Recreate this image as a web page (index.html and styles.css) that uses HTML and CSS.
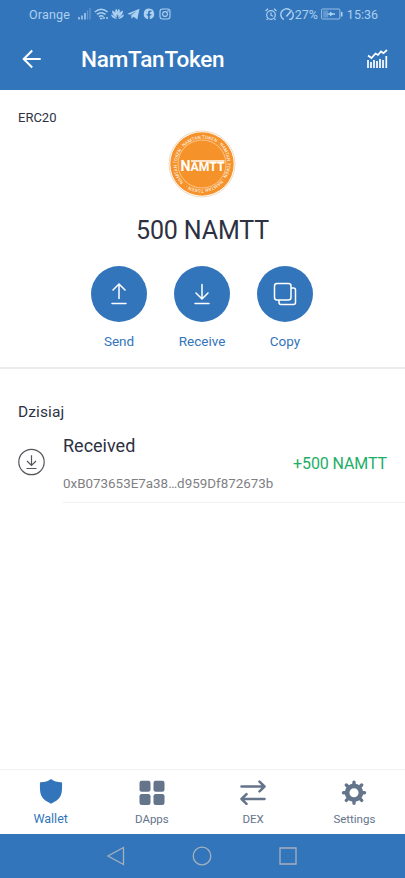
FILE: index.html
```html
<!DOCTYPE html>
<html lang="en">
<head>
    <meta charset="UTF-8">
    <meta name="viewport" content="width=device-width, initial-scale=1">
    <title>NamTanToken</title>
    <link rel="stylesheet" href="styles.css">
</head>
<body>

    <div class="status-bar">
        <div class="status-left">
            <span class="carrier">Orange</span>
            <svg class="signal" width="13" height="12" viewBox="0 0 13 12">
                <path d="M1 9v2.500M4 7.500v4M7 5v6.500" stroke="currentColor" stroke-width="1.500"/>
                <path d="M9.500 2.500v9M12 0v11.500" stroke="currentColor" stroke-width="1.300" opacity=".4"/>
            </svg>
            <svg class="wifi" width="15" height="12" viewBox="0 0 15 12" fill="none" stroke="currentColor" stroke-width="1.400">
                <path d="M.8 4q6.400-5.500 12.800 0M2.900 6.400q4.300-3.400 8.600 0M4.900 8.600q2.300-1.600 4.600 0"/>
                <path d="M6 10.500h2.500M10 9v2M13 9v2"/>
            </svg>
            <svg class="flower" width="13" height="12" viewBox="0 0 13 12" fill="currentColor">
                <path d="M5.800 11C3 11 .6 9.500 0 6.600c2.200.4 4 2 5.800 4.400zM7.200 11c2.800 0 5.200-1.500 5.800-4.400-2.200.4-4 2-5.800 4.400zM6 9.700C2.800 8 .7 5.500 1.200 2.500 4 3.300 5.800 6 6 9.700zM7 9.700c3.200-1.700 5.300-4.200 4.800-7.200C9 3.300 7.200 6 7 9.700zM6.200 7.700C3.800 5 3.500 2.800 5.100.8c1.500 1.600 1.900 4.200 1.100 6.900zM6.800 7.700C9.200 5 9.500 2.800 7.900.8c-1.500 1.600-1.900 4.200-1.100 6.900z"/>
            </svg>
            <svg class="telegram" width="13" height="12" viewBox="0 0 13 12">
                <path d="M.3 5.800 12.500.7l-2.200 10.800-3.800-2.700-2 2-.3-3.500 5.600-4.500-6.700 4z" fill="currentColor"/>
            </svg>
            <svg class="facebook" width="12" height="12" viewBox="0 0 12 12">
                <path fill="currentColor" d="M6 .6a5.400 5.400 0 0 0-.9 10.700V7.500H3.700V6h1.400V4.800c0-1.500.8-2.200 2.100-2.200l1.200.1V4h-.7c-.7 0-.9.4-.9.900V6h1.600l-.3 1.500H6.800v3.800A5.400 5.400 0 0 0 6 .6z"/>
            </svg>
            <svg class="instagram" width="12" height="12" viewBox="0 0 12 12" fill="none" stroke="currentColor" stroke-width="1.100">
                <rect x="1" y="1" width="10" height="10" rx="2.500"/>
                <circle cx="6" cy="6" r="2.400"/>
                <circle cx="9" cy="3" r=".3"/>
            </svg>
        </div>
        <div class="status-right">
            <svg class="alarm" width="12" height="13" viewBox="0 0 12 13" fill="none" stroke="currentColor" stroke-width="1.200">
                <circle cx="6" cy="7" r="4.300"/>
                <path d="M6 4.500V7.200L8 8.300M.5 3 3 .8M11.500 3 9 .8M2.600 10.700l-1 1.300M9.400 10.700l1 1.300"/>
            </svg>
            <svg class="gauge" width="15" height="13" viewBox="0 0 15 13" fill="none" stroke="currentColor" stroke-width="1.400" stroke-linecap="round">
                <path d="M3.300 11.200A5.600 5.600 0 0 1 9.800 1.800M12.600 4.500a5.600 5.600 0 0 1-1.400 6.700h-1.500"/>
                <path d="M6.800 8 11.500 2.500" stroke-width="1.600"/>
            </svg>
            <span class="percent">27%</span>
            <svg class="battery" width="22" height="12" viewBox="0 0 22 12">
                <rect x=".6" y="1" width="18.300" height="10" rx="1" fill="none" stroke="currentColor" opacity=".8"/>
                <path d="M2.200 2.500h5v7h-5z" fill="currentColor" opacity=".4"/>
                <path d="M20.700 4v4.500" stroke="currentColor" stroke-width="1.600"/>
                <path d="M5.500 6 9 4.900V3.500l2.500 1.800H14v1.400h-2.500L9 8.500V7.100z" fill="currentColor"/>
            </svg>
            <span class="time">15:36</span>
        </div>
    </div>

    <header class="header">
        <svg class="back" width="20" height="20" viewBox="0 0 20 20" fill="none" stroke="#fff" stroke-width="2">
            <path d="M18.700 10H2M10.200 1.500 1.700 10l8.500 8.500"/>
        </svg>
        <h1>NamTanToken</h1>
        <svg class="chart" width="21" height="20" viewBox="0 0 21 20" fill="none" stroke="#fff">
            <path d="M1 11v8M4 13v6M7 11v8M10 12v7M13 10v9M16 11v8M19.300 7v12" stroke-width="1.700"/>
            <path d="M1 6.500 4.500 9 8.500 4.500 11 6l3-3.500 2.500 1.700L20 1" stroke-width="1.700"/>
        </svg>
    </header>

    <main>
        <section class="token">
            <p class="token-type">ERC20</p>
            <svg class="token-logo" width="68" height="68" viewBox="0 0 68 68">
                <circle cx="34" cy="34" r="33" fill="#fff" stroke="#e9c9a6" stroke-width=".7"/>
                <circle cx="34" cy="34" r="31.700" fill="#f6922a"/>
                <circle cx="34" cy="34" r="24" fill="none" stroke="#fbd3a5" stroke-width=".8"/>
                <path id="ring" d="M15.500 52.500a26.200 26.200 0 0 1 37-37 26.200 26.200 0 0 1-37 37" fill="none"/>
                <text class="ring-text"><textPath href="#ring">NAMTAN TOKEN · NAMTAN TOKEN · NAMTAN TOKEN · NAMTAN TOKEN ·</textPath></text>
                <text class="logo-text" x="12.500" y="40.500" textLength="44" lengthAdjust="spacingAndGlyphs"><tspan class="logo-cap">N</tspan>AMTT</text>
                <path d="M23 31h33.500" stroke="#fff" stroke-width="1.500"/>
            </svg>
            <p class="balance">500 NAMTT</p>
            <div class="actions">
                <div class="action">
                    <span class="action-icon">
                        <svg width="24" height="24" viewBox="0 0 24 24" fill="none" stroke="#fff" stroke-width="1.500" stroke-linecap="round">
                            <path d="M12 16.500V2.500M6 8l6-6 6 6M5 21.500h14"/>
                        </svg>
                    </span>
                    <span>Send</span>
                </div>
                <div class="action">
                    <span class="action-icon">
                        <svg width="24" height="24" viewBox="0 0 24 24" fill="none" stroke="#fff" stroke-width="1.500" stroke-linecap="round">
                            <path d="M12 2.500v14M6 11l6 6 6-6M5 21.500h14"/>
                        </svg>
                    </span>
                    <span>Receive</span>
                </div>
                <div class="action">
                    <span class="action-icon">
                        <svg width="24" height="24" viewBox="0 0 24 24" fill="none" stroke="#fff" stroke-width="1.500">
                            <rect x="1.500" y="1.500" width="16.500" height="16.500" rx="2.500"/>
                            <path d="M18 6h2.500a2 2 0 0 1 2 2v12.500a2 2 0 0 1-2 2H8a2 2 0 0 1-2-2V18"/>
                        </svg>
                    </span>
                    <span>Copy</span>
                </div>
            </div>
        </section>

        <section class="history">
            <h2>Dzisiaj</h2>
            <div class="transaction">
                <svg class="transaction-icon" width="28" height="28" viewBox="0 0 28 28" fill="none" stroke="#55565b" stroke-width="1.200">
                    <circle cx="13.500" cy="14" r="12.700"/>
                    <path d="M13.500 7.300v10M9 13l4.500 4.500 4.500-4.500M8.500 20.500h10"/>
                </svg>
                <div class="transaction-body">
                    <div>
                        <h3>Received</h3>
                        <p class="address">0xB073653E7a38…d959Df872673b</p>
                    </div>
                    <span class="amount">+500 NAMTT</span>
                </div>
            </div>
        </section>
    </main>

    <nav class="tabs">
        <a class="tab active">
            <svg width="26" height="26" viewBox="0 0 26 26">
                <path d="M13 .1c3 2.500 6.300 3.200 10.200 3.200.6 0 .9.300.9.900-.1 5.300.2 9.300-1.700 13.100-1.700 3.200-5.100 5.300-9.400 7.500-4.300-2.200-7.700-4.300-9.400-7.500C1.700 13.500 2 9.500 1.900 4.200c0-.6.3-.9.900-.9C6.700 3.300 10 2.600 13 .1z" fill="currentColor"/>
            </svg>
            <span>Wallet</span>
        </a>
        <a class="tab">
            <svg width="26" height="26" viewBox="0 0 26 26" fill="currentColor">
                <rect x=".5" y="1.800" width="11" height="11" rx="2.200"/>
                <rect x="14.500" y="1.800" width="11" height="11" rx="2.200"/>
                <rect x=".5" y="15" width="11" height="11" rx="2.200"/>
                <rect x="14.500" y="15" width="11" height="11" rx="2.200"/>
            </svg>
            <span>DApps</span>
        </a>
        <a class="tab">
            <svg width="26" height="26" viewBox="0 0 26 26" fill="none" stroke="currentColor" stroke-width="2.500" stroke-linecap="round" stroke-linejoin="round">
                <path d="M1.500 7.500h22.500M19.500 2.700l5 4.800-5 4.800M24.500 20H2M6.500 15.200l-5 4.800 5 4.800"/>
            </svg>
            <span>DEX</span>
        </a>
        <a class="tab">
            <svg width="26" height="26" viewBox="0 0 26 26" fill="none" stroke="currentColor">
                <circle cx="13" cy="13.700" r="6.900" stroke-width="4.700"/>
                <path d="M13 5V3.200M13 22.400v1.800M4.300 13.700H2.500M21.700 13.700h1.800M6.800 7.500 5.300 6M19.200 7.500 20.700 6M6.800 19.900l-1.500 1.500M19.200 19.900l1.500 1.500" stroke-width="3.400" stroke-linecap="round"/>
            </svg>
            <span>Settings</span>
        </a>
    </nav>

    <div class="system-nav">
        <svg width="20" height="20" viewBox="0 0 20 20"><path d="M17.500 1.500v17L2 10z"/></svg>
        <svg width="20" height="20" viewBox="0 0 20 20"><circle cx="10" cy="10" r="8.800"/></svg>
        <svg width="20" height="20" viewBox="0 0 20 20"><path d="M2 2h16v16H2z"/></svg>
    </div>

</body>
</html>
```
FILE: styles.css
```css
* {
    box-sizing: border-box;
}

body {
    display: flex;
    flex-direction: column;
    height: 878px;
    margin: 0;
    background: #fff;
    color: #2d3142;
    font-family: Roboto, "Liberation Sans", sans-serif;
}

h1, h2, h3, p {
    margin: 0;
    font-weight: 400;
}

svg {
    display: block;
    flex-shrink: 0;
}

.status-bar {
    display: flex;
    justify-content: space-between;
    height: 28px;
    padding: 0 27px 0 29px;
    background: #3275bb;
    color: #acd0f0;
    font-size: 12.500px;
}

.status-left,
.status-right {
    display: flex;
    align-items: center;
}

.carrier {
    width: 49px;
    letter-spacing: .2px;
}

.wifi {
    margin-left: 3px;
}

.flower {
    margin-left: 2px;
}

.telegram {
    margin-left: 3px;
}

.facebook {
    margin-left: 3px;
}

.instagram {
    margin-left: 4px;
}

.gauge {
    margin-left: 3px;
}

.battery {
    margin: 0 4px 0 3px;
}

.header {
    display: flex;
    align-items: center;
    height: 62px;
    padding: 0 17px 0 22px;
    background: #3275bb;
    color: #fff;
}

.header h1 {
    flex: 1;
    margin-left: 39px;
    font-size: 22.500px;
    font-weight: 500;
    letter-spacing: -.2px;
    line-height: 62px;
}

.token {
    display: flex;
    flex-direction: column;
    align-items: center;
    height: 279px;
    padding: 20px 1px 0 0;
    border-bottom: 2px solid #ebebed;
}

.token-type {
    align-self: flex-start;
    margin-left: 18px;
    font-size: 13px;
    line-height: 16px;
}

.token-logo {
    margin-top: 4px;
}

.ring-text {
    fill: #fff;
    font-size: 4.500px;
    letter-spacing: .08px;
}

.logo-text {
    fill: #fff;
    font-size: 13px;
    font-weight: 700;
}

.logo-cap {
    font-size: 15px;
}

.balance {
    margin: 17px 0 0 1px;
    font-size: 25px;
    letter-spacing: -.15px;
    line-height: 32px;
}

.actions {
    display: flex;
    gap: 27px;
    margin-top: 19px;
}

.action {
    display: flex;
    flex-direction: column;
    align-items: center;
    gap: 11px;
    width: 56px;
    color: #3275bb;
    font-size: 13.500px;
    line-height: 16px;
}

.action-icon {
    display: flex;
    align-items: center;
    justify-content: center;
    width: 56px;
    height: 56px;
    border-radius: 50%;
    background: #3275bb;
}

.history h2 {
    padding: 33px 18px 0;
    font-size: 15.500px;
    letter-spacing: .1px;
    line-height: 20px;
}

.transaction {
    display: flex;
    padding-left: 18px;
}

.transaction-icon {
    margin-top: 26px;
}

.transaction-body {
    display: flex;
    flex: 1;
    justify-content: space-between;
    height: 81px;
    margin-left: 17px;
    padding: 13px 18px 0 0;
    border-bottom: 1px solid #f0f0f2;
}

.transaction h3 {
    font-size: 18px;
    line-height: 22px;
}

.address {
    margin-top: 19px;
    color: #808084;
    font-size: 13.400px;
    line-height: 16px;
}

.amount {
    margin-top: 19px;
    color: #1cae66;
    font-size: 16px;
    letter-spacing: -.1px;
    line-height: 20px;
}

.tabs {
    display: flex;
    height: 65px;
    margin-top: auto;
    border-top: 1px solid #f0f0f2;
}

.tab {
    display: flex;
    flex: 1;
    flex-direction: column;
    align-items: center;
    gap: 7px;
    padding-top: 9px;
    color: #64748b;
    font-size: 11.500px;
    line-height: 14px;
}

.tab.active {
    color: #3275bb;
    font-size: 12.500px;
}

.system-nav {
    display: flex;
    justify-content: center;
    gap: 66px;
    height: 44px;
    padding: 12px 1px 0 0;
    background: #3275bb;
    fill: none;
    stroke: #a5b1bd;
    stroke-width: 1.300;
}
```
